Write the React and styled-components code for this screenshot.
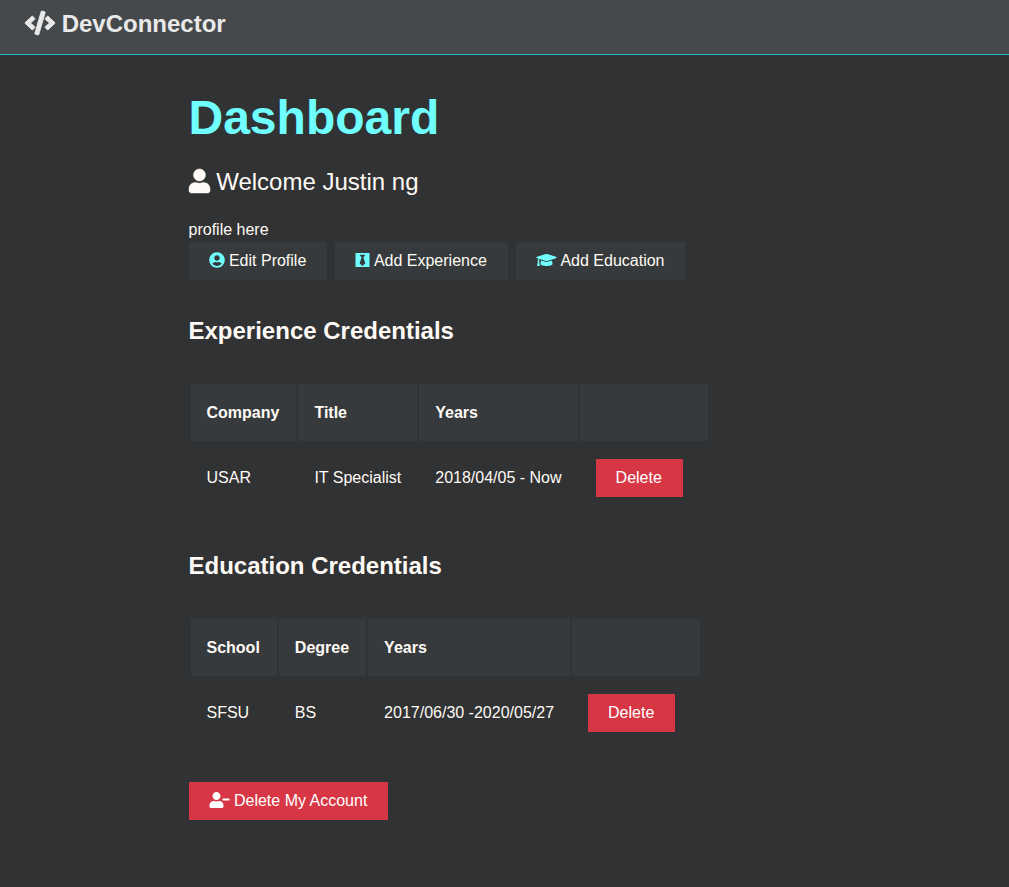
import React from "react";
import styled, { createGlobalStyle } from "styled-components";
import {
  FaCode,
  FaUser,
  FaUserCircle,
  FaBlackTie,
  FaGraduationCap,
  FaUserMinus,
} from "react-icons/fa";

const GlobalStyle = createGlobalStyle`
  *, *::before, *::after {
    box-sizing: border-box;
  }
  body {
    margin: 0;
    background: #313233;
    color: #fffaf5;
    font-family: Arial, "Liberation Sans", sans-serif;
    font-size: 16px;
    line-height: 26px;
  }
`;

const Icon = styled.span`
  svg {
    width: ${({ $width }) => $width}px;
    height: 1em;
    overflow: visible;
    stroke-width: ${({ $stroke = 0 }) => $stroke};
    vertical-align: -0.125em;
  }
`;

const Navbar = styled.nav`
  display: flex;
  align-items: flex-start;
  height: 55px;
  padding: 5px 25px;
  background: #45494b;
  border-bottom: 1px solid #1cb8c4;
`;

const Brand = styled.a`
  color: #e9e9e9;
  font-size: 24px;
  font-weight: bold;
  line-height: 38px;
  text-decoration: none;
`;

const Container = styled.main`
  max-width: 632px;
  margin: 0 auto;
  padding: 34px 0 64px;
`;

const Title = styled.h1`
  margin: 0 0 16px;
  color: #70ffff;
  font-size: 48px;
  line-height: 58px;
`;

const Lead = styled.p`
  margin: 0 0 16px;
  font-size: 24px;
  line-height: 38px;
`;

const Note = styled.p`
  margin: 0;
  line-height: 25px;
`;

const Actions = styled.div`
  display: flex;
  flex-wrap: wrap;
  gap: 8px;
`;

const Button = styled.button`
  padding: 6px 21px 6px 20px;
  border: none;
  background: ${({ $danger }) => ($danger ? "#d73745" : "#363a3c")};
  color: ${({ $danger }) => ($danger ? "#ffffff" : "#fffaf5")};
  font: inherit;
  white-space: nowrap;
  cursor: pointer;

  svg {
    color: ${({ $danger }) => ($danger ? "#ffffff" : "#70ffff")};
  }
`;

const SectionTitle = styled.h2`
  margin: 32px 0;
  font-size: 24px;
  line-height: 38px;
`;

const Table = styled.table`
  margin: 32px 0;
  border-spacing: 2px;
`;

const HeadCell = styled.th`
  padding: 16px 17px 16px 16px;
  background: #363a3c;
  line-height: 25px;
  text-align: left;
`;

const Cell = styled.td`
  padding: 16px;
`;

const ActionCell = styled(Cell)`
  padding-right: 25px;
`;

function Credentials({ title, columns, row }) {
  return (
    <section>
      <SectionTitle>{title}</SectionTitle>
      <Table aria-label={title}>
        <thead>
          <tr>
            {columns.map((column) => (
              <HeadCell key={column} scope="col">
                {column}
              </HeadCell>
            ))}
            <HeadCell as="td" />
          </tr>
        </thead>
        <tbody>
          <tr>
            {row.map((value) => (
              <Cell key={value}>{value}</Cell>
            ))}
            <ActionCell>
              <Button type="button" $danger>
                Delete
              </Button>
            </ActionCell>
          </tr>
        </tbody>
      </Table>
    </section>
  );
}

export default function App() {
  return (
    <>
      <GlobalStyle />
      <Navbar>
        <Brand href="#">
          <Icon $width={30} $stroke={20}><FaCode /></Icon> DevConnector
        </Brand>
      </Navbar>
      <Container>
        <Title>Dashboard</Title>
        <Lead>
          <Icon $width={21} $stroke={10}><FaUser /></Icon> Welcome Justin ng
        </Lead>
        <Note>profile here</Note>
        <Actions>
          <Button type="button">
            <Icon $width={16}><FaUserCircle /></Icon> Edit Profile
          </Button>
          <Button type="button">
            <Icon $width={15}><FaBlackTie /></Icon> Add Experience
          </Button>
          <Button type="button">
            <Icon $width={21}><FaGraduationCap /></Icon> Add Education
          </Button>
        </Actions>
        <Credentials
          title="Experience Credentials"
          columns={["Company", "Title", "Years"]}
          row={["USAR", "IT Specialist", "2018/04/05 - Now"]}
        />
        <Credentials
          title="Education Credentials"
          columns={["School", "Degree", "Years"]}
          row={["SFSU", "BS", "2017/06/30 -2020/05/27"]}
        />
        <Button type="button" $danger>
          <Icon $width={21}><FaUserMinus /></Icon> Delete My Account
        </Button>
      </Container>
    </>
  );
}
